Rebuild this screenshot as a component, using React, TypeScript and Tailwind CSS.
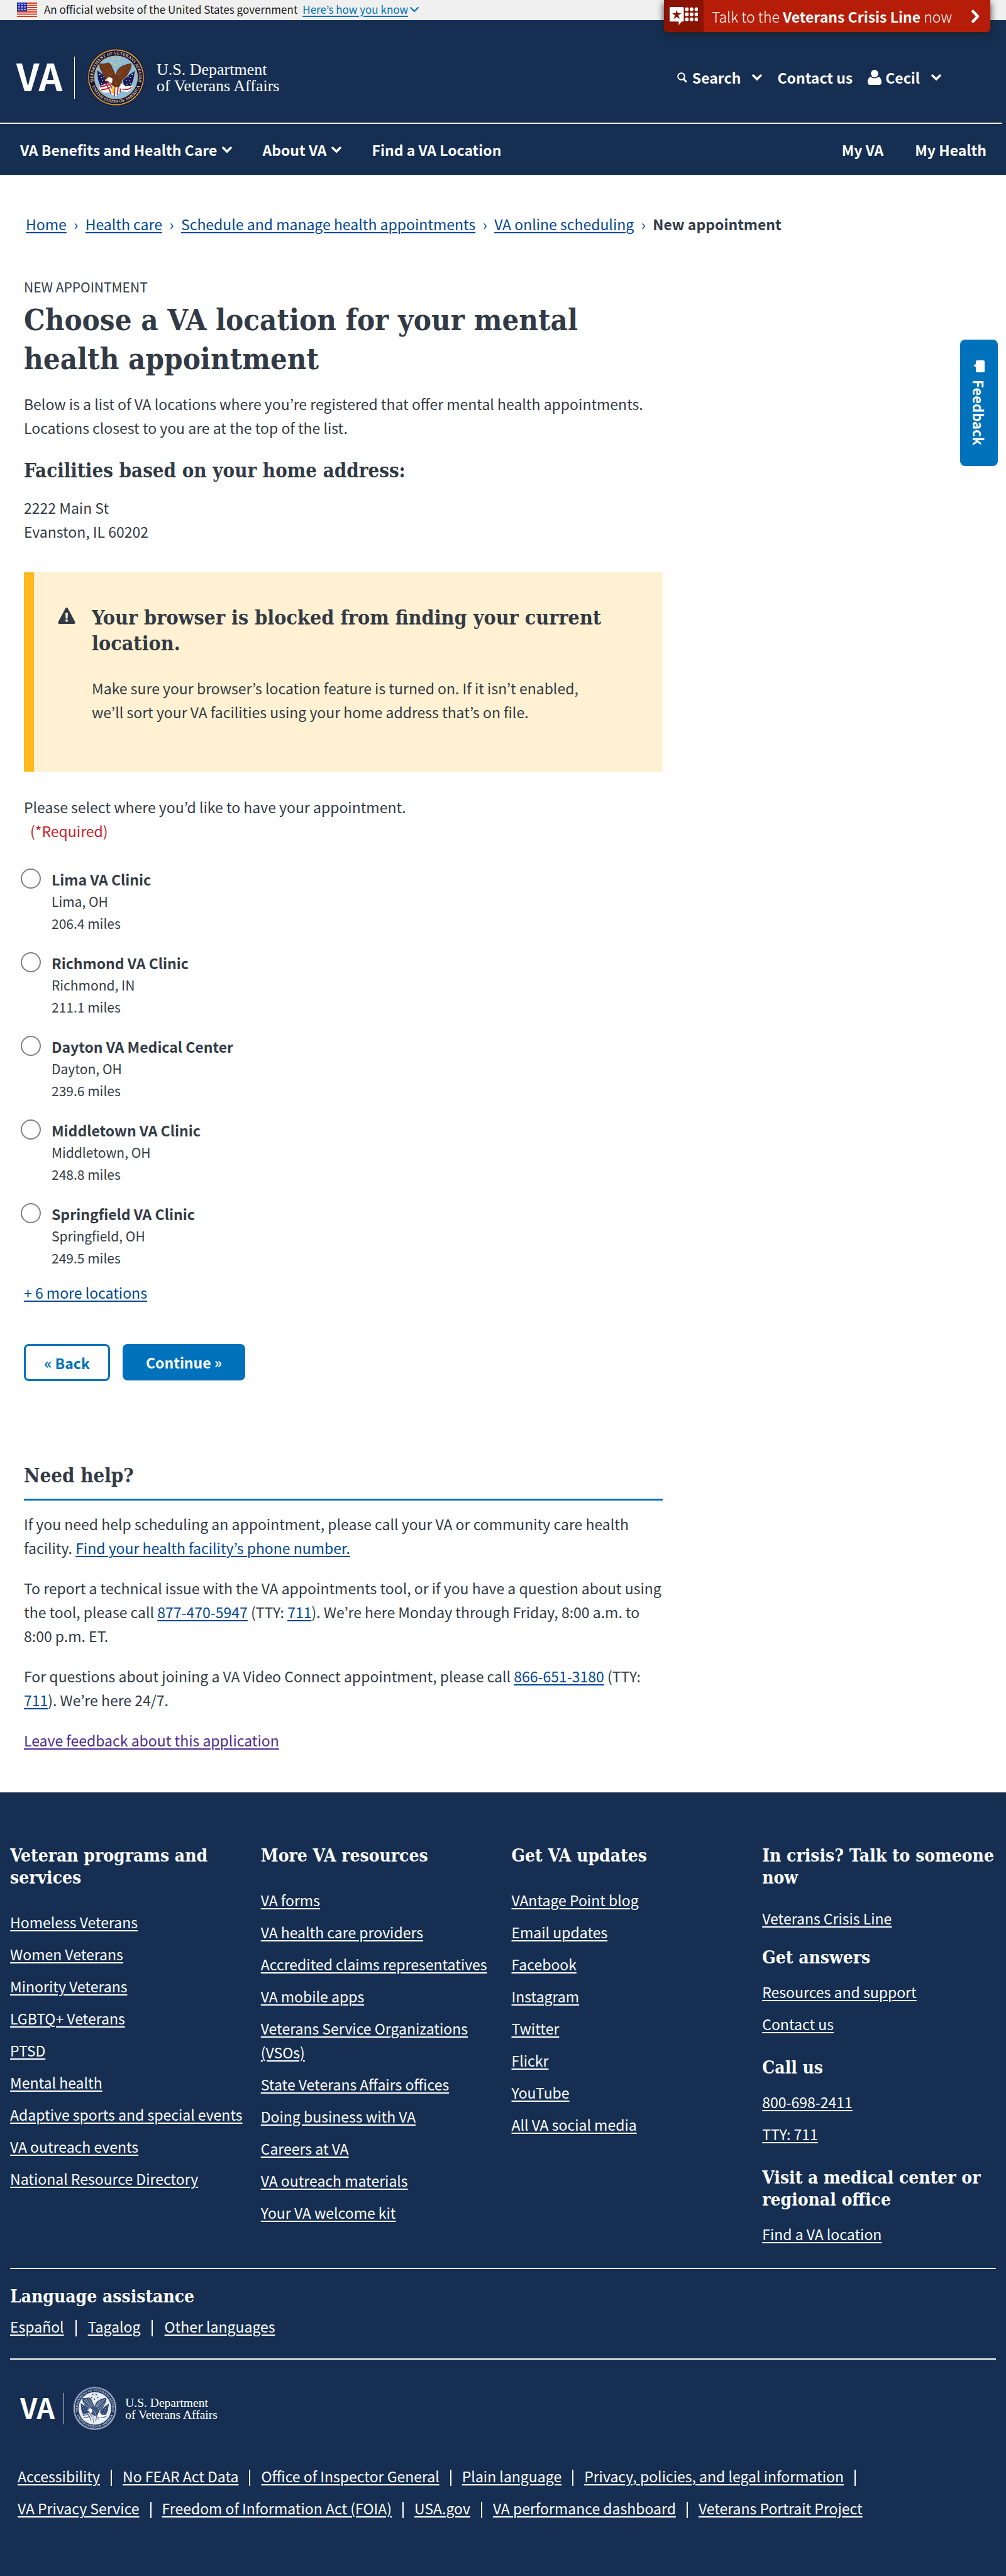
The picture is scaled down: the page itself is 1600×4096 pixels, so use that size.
import type { ReactNode } from 'react';

const facilities = [
  { id: 'lima', name: 'Lima VA Clinic', city: 'Lima, OH', miles: '206.4 miles' },
  { id: 'richmond', name: 'Richmond VA Clinic', city: 'Richmond, IN', miles: '211.1 miles' },
  { id: 'dayton', name: 'Dayton VA Medical Center', city: 'Dayton, OH', miles: '239.6 miles' },
  { id: 'middletown', name: 'Middletown VA Clinic', city: 'Middletown, OH', miles: '248.8 miles' },
  { id: 'springfield', name: 'Springfield VA Clinic', city: 'Springfield, OH', miles: '249.5 miles' },
];

const programLinks = [
  'Homeless Veterans',
  'Women Veterans',
  'Minority Veterans',
  'LGBTQ+ Veterans',
  'PTSD',
  'Mental health',
  'Adaptive sports and special events',
  'VA outreach events',
  'National Resource Directory',
];

const resourceLinks = [
  'VA forms',
  'VA health care providers',
  'Accredited claims representatives',
  'VA mobile apps',
  'Veterans Service Organizations (VSOs)',
  'State Veterans Affairs offices',
  'Doing business with VA',
  'Careers at VA',
  'VA outreach materials',
  'Your VA welcome kit',
];

const updateLinks = [
  'VAntage Point blog',
  'Email updates',
  'Facebook',
  'Instagram',
  'Twitter',
  'Flickr',
  'YouTube',
  'All VA social media',
];

const languages = ['Español', 'Tagalog', 'Other languages'];

const legalLinks = [
  'Accessibility',
  'No FEAR Act Data',
  'Office of Inspector General',
  'Plain language',
  'Privacy, policies, and legal information',
  'VA Privacy Service',
  'Freedom of Information Act (FOIA)',
  'USA.gov',
  'VA performance dashboard',
  'Veterans Portrait Project',
];

const breadcrumbs = ['Home', 'Health care', 'Schedule and manage health appointments', 'VA online scheduling'];

const starPath = 'M0 -3.2 L0.8 -1 L3.1 -1 L1.3 0.5 L1.9 2.7 L0 1.4 L-1.9 2.7 L-1.3 0.5 L-3.1 -1 L-0.8 -1 Z';

function Chevron({ className }: { className: string }) {
  return (
    <svg className={className} viewBox="0 0 16 10" fill="none" stroke="currentColor" strokeLinecap="round" aria-hidden="true">
      <path d="M2 2 L8 8 L14 2" />
    </svg>
  );
}

function Flag() {
  return (
    <svg className="h-[23px] w-8" viewBox="0 0 32 23" aria-hidden="true">
      <rect width="32" height="23" fill="#fff" />
      {[0, 1, 2, 3, 4, 5, 6].map((i) => (
        <rect key={i} y={i * 3.5} width="32" height="2" fill="#db3e1f" />
      ))}
      <rect width="16" height="14" fill="#1e33b1" />
      {[2.8, 7, 11.2].map((y) =>
        [3.2, 8, 12.8].map((x) => <circle key={`${x}-${y}`} cx={x} cy={y} r="1.1" fill="#fff" />),
      )}
    </svg>
  );
}

/* Round department seal in a 100 by 100 box, in full colour or in two tones. */
function Seal({ id, mono }: { id: string; mono: boolean }) {
  const ring = mono ? '#1b3560' : '#16123f';
  const edge = mono ? '#c9d2de' : '#dca93a';
  const sky = mono ? '#e9eef4' : '#8dbcdc';
  const wing = mono ? '#3b547c' : '#6b3418';
  const feather = mono ? '#e9eef4' : '#9c5a2c';
  const navy = mono ? '#2a446f' : '#1b1c56';
  const red = mono ? '#526a8e' : '#c0202f';
  const lettering = mono ? '#c3cddb' : '#d9cb92';
  return (
    <g>
      <circle cx="50" cy="50" r="50" fill={mono ? '#8696b0' : '#1c1640'} />
      <circle cx="50" cy="50" r="48.3" fill={edge} />
      <circle cx="50" cy="50" r="48.3" fill="none" stroke={mono ? '#4f658a' : '#8f6417'} strokeWidth="1.6" strokeDasharray="0.9 1.5" />
      <circle cx="50" cy="50" r="46.6" fill={ring} />
      <circle cx="50" cy="50" r="37.8" fill={edge} />
      <circle cx="50" cy="50" r="37" fill={sky} />
      <defs>
        <path id={`${id}-top`} d="M10.9 55.5 A39.5 39.5 0 1 1 89.1 55.5" />
        <path id={`${id}-bottom`} d="M6.2 57 A44.4 44.4 0 0 0 93.8 57" />
      </defs>
      <g fill={lettering} fontSize="7.4" fontWeight="700" className="font-['Liberation_Serif',serif]">
        <text textAnchor="middle">
          <textPath href={`#${id}-top`} startOffset="50%">DEPARTMENT OF VETERANS AFFAIRS</textPath>
        </text>
        <text textAnchor="middle">
          <textPath href={`#${id}-bottom`} startOffset="50%">UNITED STATES OF AMERICA</textPath>
        </text>
      </g>
      <circle cx="7.8" cy="58" r="1.1" fill={lettering} />
      <circle cx="92.2" cy="58" r="1.1" fill={lettering} />
      <g fill={mono ? '#2a446f' : '#f0cf3f'}>
        {[[45, 18], [53, 18], [42.5, 25], [56.5, 25], [49, 28.5]].map(([x, y]) => (
          <path key={`${x}-${y}`} d={starPath} transform={`translate(${x} ${y}) scale(0.8)`} />
        ))}
      </g>
      <path d="M16.5 37 L24 71" stroke={edge} strokeWidth="0.9" />
      <path d="M83 38 L75 72" stroke={edge} strokeWidth="0.9" />
      <path d="M17.5 38 L26 44 L38 54 L36 66 L24 68 L19 54 Z" fill={navy} />
      <path d="M82.5 39 L75 44 L62 55 L64 66 L75 67 L80 54 Z" fill={navy} />
      <g fill="#fff">
        {[[22, 45], [25, 50], [29, 49], [27, 56], [32, 55], [25, 61], [31, 62], [78, 45], [75, 50], [71, 49], [73, 56], [68, 55], [75, 61], [69, 62]].map(([x, y]) => (
          <circle key={`${x}-${y}`} cx={x} cy={y} r="0.9" />
        ))}
      </g>
      <path d="M21 66 C28 62 34 60 40 60 C48 66 56 68 64 66 C70 64 76 66 79 64 C77 73 70 77 63 74 C57 74 54 79 49 83 C43 80 40 76 35 76 C28 78 22 74 21 66 Z" fill="#fff" />
      <g fill="none" stroke={red} strokeWidth="2">
        <path d="M22 67 C28 64 33 66 39 62" />
        <path d="M24 72 C30 69 35 72 40 67" />
        <path d="M34 56 C39 62 42 64 45 74" />
        <path d="M31 60 C36 66 39 70 41 78" />
        <path d="M54 66 L52 80" />
        <path d="M58 68 L57 76" />
        <path d="M60 70 C67 71 72 72 77 67" />
        <path d="M48 66 L47 83" />
      </g>
      <path d="M21 25.5 C26 27 31 26 35 24.5 C40 25 43 29 44 34 C46 38 48 42 49 46 C51 40 53 35 58 32 C63 28 70 27 76 25.5 C78 31 75 37 72 42 C69 49 64 52 60 55 C61 60 58 65 53 67 C47 68 41 64 40 58 C34 54 28 48 25 40 C22 35 20 30 21 25.5 Z" fill={wing} />
      <g stroke={feather} strokeWidth="0.9" fill="none">
        <path d="M24 29 C30 35 35 42 41 48" />
        <path d="M29 28 C33 34 38 40 43 46" />
        <path d="M35 27 C38 32 41 37 45 44" />
        <path d="M26 38 C31 44 36 48 42 52" />
        <path d="M73 29 C68 35 62 42 55 48" />
        <path d="M68 30 C63 36 58 41 53 47" />
        <path d="M62 32 C58 37 55 41 52 46" />
        <path d="M72 38 C67 44 62 49 56 52" />
        <path d="M46 54 C49 57 51 60 52 64" />
      </g>
      <path d="M44 53 C42 49.5 36 49 34 52.5 C31 53 31 55 33 56 C36 56 40 59 43 60 Z" fill="#fff" />
      <path d="M34.5 52.5 C32 52 30.5 54 31.5 57 C33 56 35 56 36 55 Z" fill={mono ? '#6d82a3' : '#ecc23a'} />
      <path d="M58 60 L66 64 L64 71 L57 69 Z" fill="#fff" />
      <path d="M43 65 L48 67 L46 79 L42 76 Z" fill={mono ? '#c9d2de' : '#eec32f'} />
    </g>
  );
}

function DepartmentLogo({ id, mono, className }: { id: string; mono: boolean; className: string }) {
  return (
    <svg className={className} viewBox="0 0 424 92" role="img" aria-label="VA, U.S. Department of Veterans Affairs">
      <text x="0" y="68" fontSize="59" fontWeight="700" fill="#fff" className="font-['Noto_Sans_CJK_KR',sans-serif]">VA</text>
      <rect x="92" y="13" width="1" height="67" fill="#fff" />
      <svg x="112.5" y="0" width="92" height="92" viewBox="0 0 100 100">
        <Seal id={id} mono={mono} />
      </svg>
      <g fill="#fff" fontSize="26" fontWeight="400" className="font-['Liberation_Serif',serif]">
        <text x="223" y="42">U.S. Department</text>
        <text x="223" y="68">of Veterans Affairs</text>
      </g>
    </svg>
  );
}

function Link({ children }: { children: ReactNode }) {
  return (
    <a href="#" className="text-[#004795] underline decoration-2 underline-offset-3">
      {children}
    </a>
  );
}

function FooterLink({ children }: { children: ReactNode }) {
  return (
    <a href="#" className="underline decoration-2 underline-offset-3">
      {children}
    </a>
  );
}

const slab = "font-['DejaVu_Serif_Condensed','DejaVu_Serif',serif]";

function FooterHeading({ children }: { children: ReactNode }) {
  return <h2 className={`${slab} text-[28px] leading-[35px] font-bold`}>{children}</h2>;
}

function FooterList({ items, className }: { items: string[]; className: string }) {
  return (
    <ul className={`flex flex-col gap-[13px] ${className}`}>
      {items.map((item) => (
        <li key={item}>
          <FooterLink>{item}</FooterLink>
        </li>
      ))}
    </ul>
  );
}

function SiteHeader() {
  return (
    <header className="relative">
      <div className="flex h-8 items-center bg-[#f0f0f0] pb-0.5 pl-[27px] text-[17px] leading-[30px] text-[#1b1b1b]">
        <Flag />
        <span className="ml-[11px]">An official website of the United States government</span>
        <button type="button" className="ml-2 flex items-center text-[#0071bb]">
          <span className="underline decoration-2 underline-offset-3">Here’s how you know</span>
          <Chevron className="ml-0.5 h-2.5 w-4 stroke-2" />
        </button>
      </div>

      <div className="absolute top-0 right-[25px] h-[51px]">
        <button type="button" className="flex h-full w-[519px] items-center overflow-hidden rounded-b-md bg-[#b51d09] text-[23px] text-white shadow-[0_4px_12px_rgba(34,34,34,0.9)]">
          <span className="flex h-full w-[63px] items-center justify-center bg-[#8b1303]">
            <svg className="h-[29px] w-[45px]" viewBox="0 0 56 36" fill="#fff" aria-hidden="true">
              <path fillRule="evenodd" d="M2 0 H26 Q28 0 28 2 V27 Q28 29 26 29 H24 L18 36 V29 H2 Q0 29 0 27 V2 Q0 0 2 0 Z M14 6 L11.8 12.5 H5 L10.5 16.5 L8 24 L14 19.5 L20 24 L17.5 16.5 L23 12.5 H16.2 Z" />
              {[4.5, 14.5, 24.5].map((y) =>
                [34, 43.5, 53].map((x) => <circle key={`${x}-${y}`} cx={x} cy={y} r="3.7" />),
              )}
            </svg>
          </span>
          <span className="ml-[13px] font-light">
            Talk to the <strong className="font-bold">Veterans Crisis Line</strong> now
          </span>
          <svg className="mr-4 ml-auto h-[22px] w-[15px]" viewBox="0 0 15 22" fill="none" stroke="#fff" strokeWidth="4.5" strokeLinecap="round" strokeLinejoin="round" aria-hidden="true">
            <path d="M3.5 3 L11 11 L3.5 19" />
          </svg>
        </button>
      </div>

      <div className="bg-[#152e51] text-[23px] leading-[38px] font-bold text-white">
        <div className="mr-1.5 flex h-[165px] items-center border-b-2 border-white pt-[18px] pr-[97px] pl-[26px]">
          <a href="#">
            <DepartmentLogo id="header-seal" mono={false} className="h-[92px] w-[424px]" />
          </a>
          <div className="ml-auto flex items-center gap-6">
            <button type="button" className="flex items-center">
              <svg className="mr-2 h-[18px] w-4" viewBox="0 0 16 18" fill="none" stroke="currentColor" strokeWidth="2" aria-hidden="true">
                <circle cx="6.5" cy="7.5" r="5.3" />
                <path d="M10 11.5 L15 16.5" strokeWidth="3" />
              </svg>
              Search
              <Chevron className="ml-[18px] h-2.5 w-4 stroke-[3.5]" />
            </button>
            <a href="#">Contact us</a>
            <button type="button" className="flex items-center">
              <svg className="mr-1.5 h-6 w-[22px]" viewBox="0 0 22 24" fill="currentColor" aria-hidden="true">
                <ellipse cx="11" cy="6" rx="5.8" ry="6" />
                <path d="M4.5 11 Q7.5 13.5 11 13.5 T17.5 11 Q22 13 22 20 Q22 24 18 24 H4 Q0 24 0 20 Q0 13 4.5 11 Z" />
              </svg>
              Cecil
              <Chevron className="ml-[18px] h-2.5 w-4 stroke-[3.5]" />
            </button>
          </div>
        </div>
        <nav className="flex h-[81px] items-center pr-[31px] pl-8">
          <button type="button" className="flex items-center">
            VA Benefits and Health Care
            <Chevron className="ml-2 h-2.5 w-4 stroke-[3.5]" />
          </button>
          <button type="button" className="ml-12 flex items-center">
            About VA
            <Chevron className="ml-2 h-2.5 w-4 stroke-[3.5]" />
          </button>
          <a href="#" className="ml-12">Find a VA Location</a>
          <a href="#" className="ml-auto">My VA</a>
          <a href="#" className="ml-[50px]">My Health</a>
        </nav>
      </div>
    </header>
  );
}

function FeedbackTab() {
  return (
    <button type="button" className="absolute top-[540px] right-[13px] flex h-[201px] w-[60px] items-center justify-center gap-3 rounded-lg bg-[#0071bb] text-[22px] font-bold text-white [writing-mode:vertical-rl]">
      <svg className="h-[19px] w-[18px]" viewBox="0 0 18 19" fill="#fff" aria-hidden="true">
        <path d="M6 0 H16 Q18 0 18 2 V17 Q18 19 16 19 H6 Q4 19 4 17 V11 L0 7.5 L4 6 V2 Q4 0 6 0 Z" />
      </svg>
      Feedback
    </button>
  );
}

function BlockedAlert() {
  return (
    <section className="mt-[46px] flex border-l-16 border-[#ffb81d] bg-[#fff1d2] pt-[52px] pr-[85px] pb-[76px] pl-[38px]">
      <svg className="mt-1 h-[26px] w-7 shrink-0" viewBox="0 0 28 26" aria-hidden="true">
        <path d="M14 0 Q15.2 0 16 1.5 L27.5 23 Q28.5 26 25.5 26 H2.5 Q-0.5 26 0.5 23 L12 1.5 Q12.8 0 14 0 Z" fill="#323a45" />
        <path d="M12 8.5 H16 L15.5 17.5 H12.5 Z M12.2 19 H15.8 V22.5 H12.2 Z" fill="#fff1d2" />
      </svg>
      <div className="ml-[26px]">
        <h3 className={`${slab} text-[32px] leading-[41px] font-bold`}>
          Your browser is blocked from finding your current location.
        </h3>
        <p className="mt-[31px]">
          Make sure your browser’s location feature is turned on. If it isn’t enabled, we’ll sort your VA
          facilities using your home address that’s on file.
        </p>
      </div>
    </section>
  );
}

function FacilityPicker() {
  return (
    <fieldset className="mt-[37px]">
      <legend>
        Please select where you’d like to have your appointment.
        <span className="ml-2.5 block text-[#cd2026]">(*Required)</span>
      </legend>
      <div className="-ml-[5px] flex flex-col gap-7 pt-[41px]">
        {facilities.map((f) => (
          <div key={f.id} className="flex items-start">
            <input
              type="radio"
              id={f.id}
              name="facility"
              value={f.id}
              className="size-8 shrink-0 appearance-none rounded-full border-2 border-[#808080] bg-white checked:bg-[#0071bb]"
            />
            <label htmlFor={f.id} className="ml-[17px] text-[21px] leading-[35px]">
              <span className="block text-[23px] leading-[35px] font-bold">{f.name}</span>
              <span className="block">{f.city}</span>
              <span className="block">{f.miles}</span>
            </label>
          </div>
        ))}
      </div>
    </fieldset>
  );
}

function NeedHelp() {
  return (
    <section className="mt-[130px] flex flex-col">
      <h2 className={`${slab} border-b-3 border-[#0071bb] pb-[17px] text-[31px] leading-10 font-bold`}>Need help?</h2>
      <div className="flex flex-col gap-[26px] pt-[18px]">
        <p>
          If you need help scheduling an appointment, please call your VA or community care health facility.{' '}
          <Link>Find your health facility’s phone number.</Link>
        </p>
        <p>
          To report a technical issue with the VA appointments tool, or if you have a question about using the
          tool, please call <Link>877-470-5947</Link> (TTY: <Link>711</Link>). We’re here Monday through Friday,
          8:00 a.m. to 8:00 p.m. ET.
        </p>
        <p>
          For questions about joining a VA Video Connect appointment, please call <Link>866-651-3180</Link> (TTY:{' '}
          <Link>711</Link>). We’re here 24/7.
        </p>
        <p>
          <a href="#" className="text-[#4c2c92] underline decoration-2 underline-offset-3">
            Leave feedback about this application
          </a>
        </p>
      </div>
    </section>
  );
}

function SiteFooter() {
  return (
    <footer className="grow bg-[#152e51] px-4 pt-[83px] pb-16 text-white">
      <div className="grid grid-cols-4 gap-x-[27px] pb-[35px]">
        <section>
          <FooterHeading>Veteran programs and services</FooterHeading>
          <FooterList items={programLinks} className="mt-[34px]" />
        </section>
        <section>
          <FooterHeading>More VA resources</FooterHeading>
          <FooterList items={resourceLinks} className="mt-[34px]" />
        </section>
        <section>
          <FooterHeading>Get VA updates</FooterHeading>
          <FooterList items={updateLinks} className="mt-[34px]" />
        </section>
        <div className="flex flex-col gap-[33px]">
          <section className="-mb-[7px]">
            <FooterHeading>In crisis? Talk to someone now</FooterHeading>
            <FooterList items={['Veterans Crisis Line']} className="mt-7" />
          </section>
          <section>
            <FooterHeading>Get answers</FooterHeading>
            <FooterList items={['Resources and support', 'Contact us']} className="mt-[18px]" />
          </section>
          <section>
            <FooterHeading>Call us</FooterHeading>
            <FooterList items={['800-698-2411', 'TTY: 711']} className="mt-[18px]" />
          </section>
          <section>
            <FooterHeading>Visit a medical center or regional office</FooterHeading>
            <FooterList items={['Find a VA location']} className="mt-[18px]" />
          </section>
        </div>
      </div>

      <section className="border-y-2 border-white pt-[26px] pb-8">
        <FooterHeading>Language assistance</FooterHeading>
        <ul className="mt-[11px] flex">
          {languages.map((item, i) => (
            <li key={item} className="flex items-center">
              {i > 0 && <span className="mx-[18px] mt-1.5 h-[26px] w-0.5 bg-white" />}
              <FooterLink>{item}</FooterLink>
            </li>
          ))}
        </ul>
      </section>

      <a href="#" className="mt-[43px] ml-4 block w-fit">
        <DepartmentLogo id="footer-seal" mono className="h-[69px] w-[318px]" />
      </a>

      <ul className="mt-[54px] flex flex-wrap gap-y-[13px] px-3">
        {legalLinks.map((item, i) => (
          <li key={item} className="flex items-center">
            <FooterLink>{item}</FooterLink>
            {i < legalLinks.length - 1 && <span className="mx-[17px] mt-1.5 h-[26px] w-0.5 bg-white" />}
          </li>
        ))}
      </ul>
    </footer>
  );
}

export default function App() {
  return (
    <div className="relative flex min-h-screen flex-col bg-white font-['Noto_Sans_CJK_KR',sans-serif] text-[23px] leading-[38px] text-[#323a45]">
      <SiteHeader />
      <FeedbackTab />
      <nav aria-label="Breadcrumb" className="pt-[59px] pl-[41px]">
        <ol className="flex flex-wrap">
          {breadcrumbs.map((item) => (
            <li key={item} className="flex">
              <Link>{item}</Link>
              <span className="w-[30px] text-center text-[#004795]">›</span>
            </li>
          ))}
          <li className="font-bold" aria-current="page">New appointment</li>
        </ol>
      </nav>
      <main className="w-full max-w-[1054px] pt-[67px] pb-16 pl-[38px]">
        <p className="text-[21px] leading-7 uppercase">New appointment</p>
        <h1 className={`${slab} mt-2 text-[47px] leading-[62px] font-bold`}>
          Choose a VA location for your mental health appointment
        </h1>
        <p className="mt-[21px]">
          Below is a list of VA locations where you’re registered that offer mental health appointments. Locations
          closest to you are at the top of the list.
        </p>
        <h2 className={`${slab} mt-[29px] text-[31px] leading-10 font-bold`}>Facilities based on your home address:</h2>
        <address className="mt-5 not-italic">
          2222 Main St
          <br />
          Evanston, IL 60202
        </address>
        <BlockedAlert />
        <FacilityPicker />
        <p className="mt-[18px]">
          <Link>+ 6 more locations</Link>
        </p>
        <div className="mt-[63px] flex gap-5">
          <button type="button" className="h-[59px] w-[137px] rounded-lg border-3 border-[#0071bb] bg-white font-bold text-[#0071bb]">
            « Back
          </button>
          <button type="button" className="h-[58px] w-[195px] rounded-lg bg-[#0071bb] font-bold text-white">
            Continue »
          </button>
        </div>
        <NeedHelp />
      </main>
      <SiteFooter />
    </div>
  );
}
